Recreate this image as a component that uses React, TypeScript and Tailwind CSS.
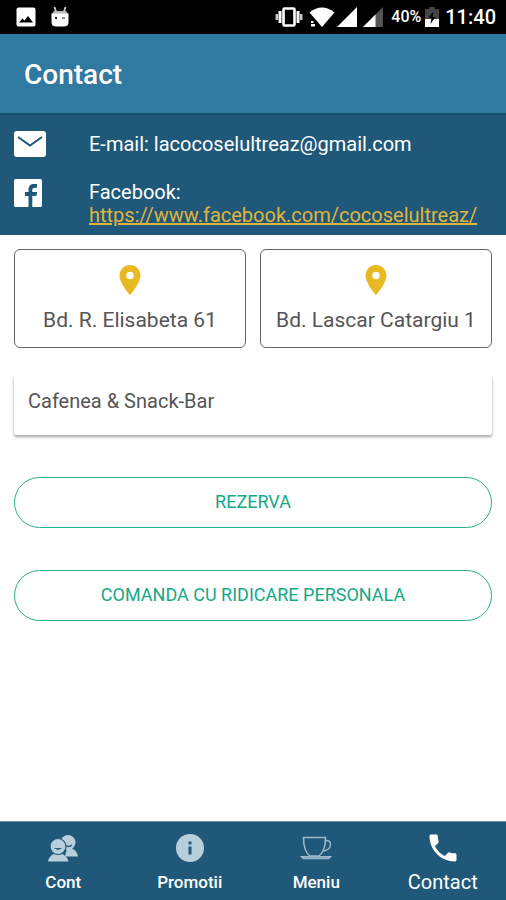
import React from 'react';
import { MdLocalPhone, MdPlace } from 'react-icons/md';

const ImageIcon = () => (
  <svg viewBox="0 0 20 20" className="h-5 w-5" aria-hidden="true">
    <rect x="0.5" y="0.5" width="19" height="19" rx="2" fill="#fff" />
    <path d="M3 15.5l3.5-4 2 2 3.500-4.500 5 6.500z" fill="#000" />
  </svg>
);

const RobotIcon = () => (
  <svg viewBox="0 0 20 22" className="h-[22px] w-5" aria-hidden="true">
    <path d="M4.500 1l1.500 4.500M15.500 1l-1.500 4.500" stroke="#ccc" strokeWidth="1.800" />
    <path d="M4 5h12l2 3H2z" fill="#bbb" />
    <path d="M1.500 7.500h17V16q0 4.500-4.500 4.500H6Q1.500 20.500 1.500 16z" fill="#fff" />
    <circle cx="6" cy="12" r="1.200" fill="#222" />
    <path d="M12 12h3" stroke="#555" strokeWidth="1.300" />
  </svg>
);

const VibrateIcon = () => (
  <svg viewBox="0 0 28 20" className="h-5 w-7" fill="none" stroke="#fff" aria-hidden="true">
    <rect x="8.500" y="1.500" width="11" height="17" rx="1" strokeWidth="2.600" />
    <path d="M5 4v12M23 4v12" strokeWidth="3" />
    <path d="M1.800 7v6M26.200 7v6" strokeWidth="2.500" stroke="#ccc" />
  </svg>
);

const WifiIcon = () => (
  <svg viewBox="0 0 26 20" className="h-5 w-[26px]" fill="#fff" aria-hidden="true">
    <path d="M0.500 5.500Q13-4.500 25.500 5.500L13 20z" />
    <path d="M1.500 13h5v7h-5z" fill="#000" />
    <path d="M2 14h2.500v2H2zM2 17h4v2.500H2z" />
  </svg>
);

const SignalIcon = ({ weak = false }: { weak?: boolean }) => (
  <svg viewBox="0 0 20 20" className="h-5 w-5" aria-hidden="true">
    <path d="M0 20L20 0v20z" fill={weak ? '#555' : '#fff'} />
    {weak && <path d="M0 20L12.500 7.500V20z" fill="#fff" />}
  </svg>
);

const BatteryIcon = () => (
  <svg viewBox="0 0 14 20" className="h-5 w-3.5" aria-hidden="true">
    <path d="M4 0h6v2h4v10H0V2h4z" fill="#444" />
    <path d="M0 12h14v8H0z" fill="#fff" />
    <path d="M8.500 4.500l-5 6.500h3l-1 6 5-7H7.500z" fill="#000" />
  </svg>
);

const MailIcon = () => (
  <svg viewBox="0 0 32 26" className="h-[26px] w-8" aria-hidden="true">
    <rect width="32" height="26" rx="3" fill="#fff" />
    <path d="M4 6l12 8.500L28 6" fill="none" stroke="#1f5879" strokeWidth="2" />
  </svg>
);

const FacebookIcon = () => (
  <svg viewBox="0 0 28 28" className="h-7 w-7" aria-hidden="true">
    <rect width="28" height="28" rx="1.500" fill="#fff" />
    <path
      d="M14.500 28V17H11v-4h3.500v-2.500C14.500 7 16.500 5 20 5h3v3.700h-2c-2 0-2.700.8-2.700 2.500V13H23l-.6 4h-4.100v11z"
      fill="#1f5879"
    />
  </svg>
);

const PeopleIcon = () => (
  <svg viewBox="0 0 30 28" className="h-7 w-[30px]" fill="#b7cfdb" aria-hidden="true">
    <path d="M17 22.500l2-8h5q5 2 6 8z" />
    <circle cx="20" cy="8.500" r="7.500" />
    <path d="M17 11q3.500 3 7 0" fill="none" stroke="#1f5879" strokeWidth="1.300" />
    <path d="M0 27.500Q1 21.500 7 19.500h6q6 2 7.500 8z" />
    <circle cx="10" cy="12.500" r="8" stroke="#1f5879" strokeWidth="1.200" />
    <path d="M6 14h8q-4 3.500-8 0z" fill="#1f5879" />
  </svg>
);

const InfoIcon = () => (
  <svg viewBox="0 0 28 28" className="h-7 w-7" aria-hidden="true">
    <circle cx="14" cy="14" r="14" fill="#b7cfdb" />
    <path d="M12.500 7.500h3v3h-3zM12.500 12.500h3v8h-3z" fill="#1f5879" />
  </svg>
);

const CupIcon = () => (
  <svg viewBox="0 0 32 24" className="h-6 w-8" fill="none" stroke="#9dbccd" strokeWidth="1.500" aria-hidden="true">
    <path d="M3.500 1.500h22c0 10-2.500 15.500-6.500 18.500H10C6 17 3.500 11.500 3.500 1.500z" />
    <path d="M25.500 4.500c3-.5 5 1 5 4 0 3.500-3.500 6.500-7 6.500" />
    <path d="M1.500 20.700h29l-2 1.800h-25z" />
  </svg>
);

const locations = ['Bd. R. Elisabeta 61', 'Bd. Lascar Catargiu 1'];

const tabs = [
  { label: 'Cont', icon: <PeopleIcon /> },
  { label: 'Promotii', icon: <InfoIcon /> },
  { label: 'Meniu', icon: <CupIcon /> },
  { label: 'Contact', icon: <MdLocalPhone className="h-9 w-9" />, active: true },
];

const App: React.FC = () => {
  return (
    <div className="flex min-h-screen flex-col bg-white font-[Roboto,sans-serif]">
      <div className="flex h-[34px] items-center justify-between bg-black pl-4 pr-2.5 text-white">
        <div className="flex items-center gap-3.5">
          <ImageIcon />
          <RobotIcon />
        </div>
        <div className="flex items-center">
          <VibrateIcon />
          <span className="ml-1.5 flex items-center gap-0.5">
            <WifiIcon />
            <SignalIcon />
            <span className="ml-1">
              <SignalIcon weak />
            </span>
          </span>
          <span className="ml-2 mr-1 text-base font-medium">40%</span>
          <BatteryIcon />
          <span className="ml-1.5 text-xl font-medium">11:40</span>
        </div>
      </div>

      <header className="flex h-[79px] items-center bg-[#3079a0] px-6">
        <h1 className="pt-0.5 text-[28px] font-medium text-white">Contact</h1>
      </header>

      <section className="border-t-2 border-[#1a4c6b] bg-[#1f5879] px-3.5 pb-2 pt-4 text-xl leading-[23px] text-white">
        <div className="flex items-start">
          <div className="w-[75px] shrink-0">
            <MailIcon />
          </div>
          <p className="pt-0.5">E-mail: lacocoselultreaz@gmail.com</p>
        </div>
        <div className="mt-[22px] flex items-start">
          <div className="w-[75px] shrink-0">
            <FacebookIcon />
          </div>
          <p className="pt-0.5">
            Facebook:
            <br />
            <a href="https://www.facebook.com/cocoselultreaz/" className="text-[#e0b43c] underline">
              https://www.facebook.com/cocoselultreaz/
            </a>
          </p>
        </div>
      </section>

      <main className="flex-1 px-3.5 pt-3.5 text-[#555]">
        <div className="grid grid-cols-2 gap-3.5">
          {locations.map((name) => (
            <button
              key={name}
              type="button"
              className="flex h-[99px] flex-col items-center rounded-md border border-[#666] pt-3 text-[21px] leading-7"
            >
              <MdPlace className="h-9 w-9 text-[#e8b920]" />
              <span className="mt-2 whitespace-nowrap">{name}</span>
            </button>
          ))}
        </div>

        <div className="mt-[27px] h-[60px] rounded-xs px-3.5 pt-3 text-xl shadow-[0_2px_3px_rgba(0,0,0,0.35)]">
          Cafenea &amp; Snack-Bar
        </div>

        <button
          type="button"
          className="mt-[42px] h-[51px] w-full rounded-full border border-[#27ae8b] pb-0.5 text-lg text-[#16a885]"
        >
          REZERVA
        </button>
        <button
          type="button"
          className="mt-[42px] h-[51px] w-full rounded-full border border-[#27ae8b] pb-0.5 text-lg text-[#16a885]"
        >
          COMANDA CU RIDICARE PERSONALA
        </button>
      </main>

      <nav className="grid h-[79px] grid-cols-4 border-t border-[#6f93a8] bg-[#1f5879] text-white">
        {tabs.map((tab) => (
          <a key={tab.label} href="#" className="flex flex-col items-center pt-2.5">
            <span className="flex h-8 items-center">{tab.icon}</span>
            <span className={tab.active ? 'mt-1 text-xl' : 'mt-1 text-[17px] font-medium leading-7'}>{tab.label}</span>
          </a>
        ))}
      </nav>
    </div>
  );
};

export default App;
